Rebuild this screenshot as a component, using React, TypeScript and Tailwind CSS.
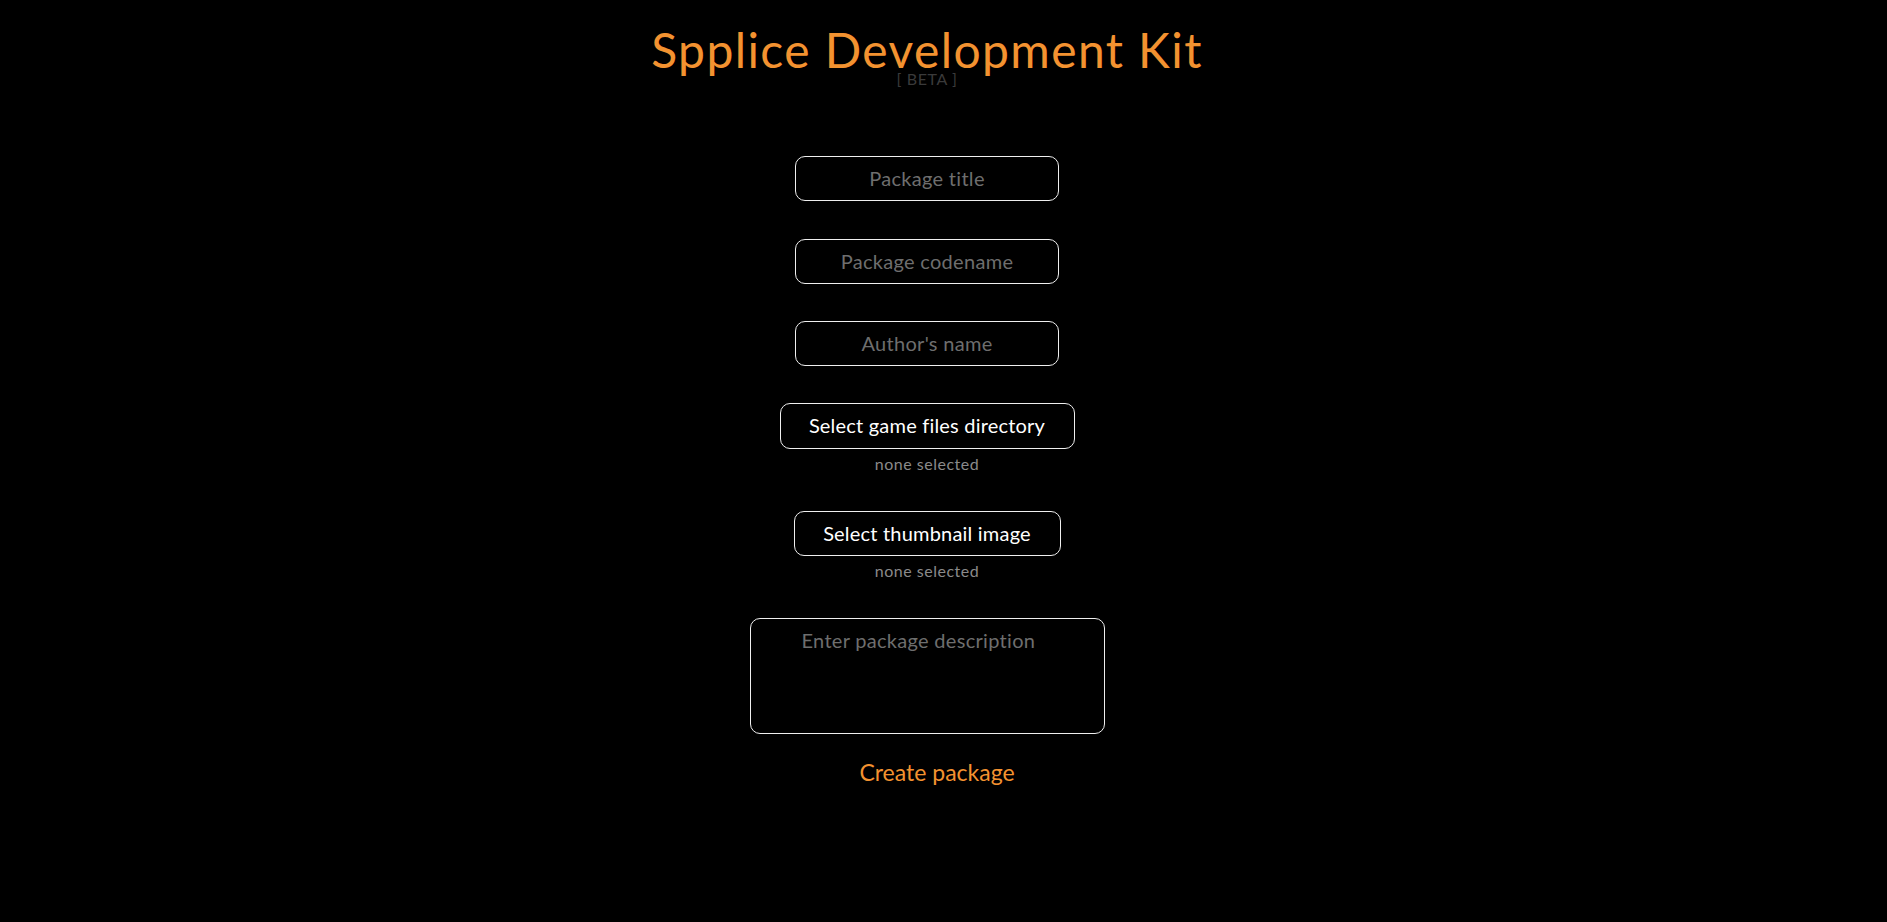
import React from "react";

const font = { fontFamily: '"Lato", "Noto Sans", sans-serif' };

export default function App() {
  return (
    <div
      className="min-h-[922px] w-full bg-black font-['Lato','Noto_Sans',sans-serif]"
      style={font}
    >
      <div className="w-[1854px] flex flex-col items-center">
        <h1 className="mt-[21px] text-[48px] leading-[58px] text-[#f39230] font-normal tracking-[1.4px]">
          Spplice Development Kit
        </h1>
        <div className="-mt-[9px] text-[16px] leading-[18px] text-[#3a3a3a] tracking-[0.6px]">[ BETA ]</div>

        <input
          placeholder="Package title"
          className="mt-[68px] w-[264px] h-[45px] pb-[2px] rounded-[10px] border border-[#efefef] bg-black text-center text-[20px] tracking-[0.3px] text-white placeholder:text-[#6e6e6e] outline-none"
        />
        <input
          placeholder="Package codename"
          className="mt-[38px] w-[264px] h-[45px] pb-[2px] rounded-[10px] border border-[#efefef] bg-black text-center text-[20px] tracking-[0.3px] text-white placeholder:text-[#6e6e6e] outline-none"
        />
        <input
          placeholder="Author's name"
          className="mt-[37px] w-[264px] h-[45px] pb-[2px] rounded-[10px] border border-[#efefef] bg-black text-center text-[20px] tracking-[0.3px] text-white placeholder:text-[#6e6e6e] outline-none"
        />

        <button className="mt-[37px] w-[295px] h-[46px] pb-[2px] rounded-[10px] border border-[#efefef] bg-black text-[20px] tracking-[0.2px] text-white">
          Select game files directory
        </button>
        <div className="mt-[5px] text-[16px] leading-[20px] tracking-[0.5px] text-[#8a8a8a]">none selected</div>

        <button className="mt-[37px] w-[267px] h-[45px] pb-[2px] rounded-[10px] border border-[#efefef] bg-black text-[20px] tracking-[0.2px] text-white">
          Select thumbnail image
        </button>
        <div className="mt-[5px] text-[16px] leading-[20px] tracking-[0.5px] text-[#8a8a8a]">none selected</div>

        <textarea
          placeholder="Enter package description"
          className="mt-[37px] w-[355px] h-[116px] rounded-[10px] border border-[#efefef] bg-black pl-[51px] pr-[10px] pt-[9px] text-[20px] tracking-[0.3px] leading-[24px] text-white placeholder:text-[#6e6e6e] outline-none resize-none"
        />

        <button className="mt-[23px] ml-[20px] text-[23px] leading-[30px] text-[#f39230] bg-transparent">
          Create package
        </button>
      </div>
    </div>
  );
}
